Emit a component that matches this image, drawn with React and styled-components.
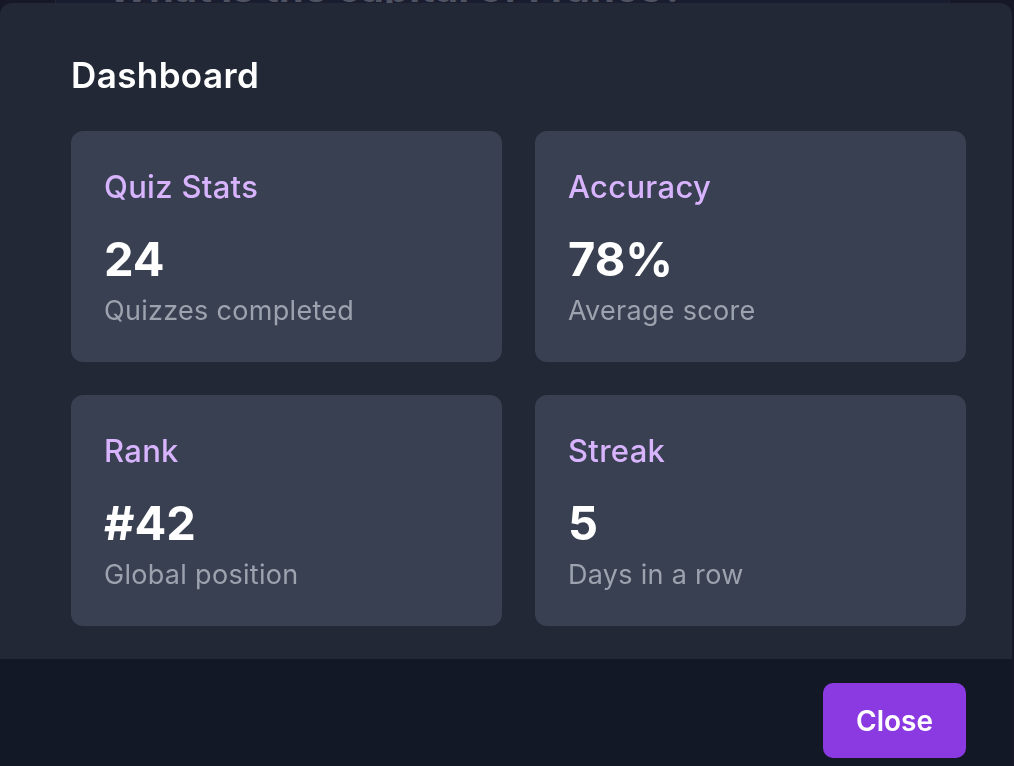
import React from "react";
import styled, { createGlobalStyle } from "styled-components";

const GlobalStyle = createGlobalStyle`
    html, body {
        margin: 0;
        padding: 0;
        background: #161827;
        font-family: Inter, "Noto Sans", "Liberation Sans", sans-serif;
        overflow: hidden;
    }
    * {
        box-sizing: border-box;
    }
`;

const stats = [
    { title: "Quiz Stats", value: "24", caption: "Quizzes completed" },
    { title: "Accuracy", value: "78%", caption: "Average score" },
    { title: "Rank", value: "#42", caption: "Global position" },
    { title: "Streak", value: "5", caption: "Days in a row" },
];

const App = () =>
{
    return (
        <>
            <GlobalStyle />
            <Page>
                <QuestionCard>
                    <Question>What is the capital of France?</Question>
                </QuestionCard>
            </Page>
            <Overlay>
                <Modal>
                    <Body>
                        <Title>Dashboard</Title>
                        <Grid>
                            {stats.map(item => {
                                return (
                                    <Card key={item.title}>
                                        <CardTitle>{item.title}</CardTitle>
                                        <Value>{item.value}</Value>
                                        <Caption>{item.caption}</Caption>
                                    </Card>
                                );
                            })}
                        </Grid>
                    </Body>
                    <Footer>
                        <CloseButton>Close</CloseButton>
                    </Footer>
                </Modal>
            </Overlay>
        </>
    );
};

const Page = styled.div`
    height: 766px;
    display: flex;
    justify-content: center;
`;

const QuestionCard = styled.div`
    width: 895px;
    margin-left: -10px;
    height: 200px;
    margin-top: -56px;
    background: #1a1c30;
    border-left: 1px solid #222538;
    border-right: 1px solid #222538;
    padding: 20px 52px;
`;

const Question = styled.h2`
    margin: 0;
    font-size: 40px;
    font-weight: 700;
    line-height: 48px;
    color: #4f5362;
`;

const Overlay = styled.div`
    position: fixed;
    inset: 0;
    display: flex;
    align-items: flex-start;
    padding-top: 3px;
`;

const Modal = styled.div`
    width: 1012px;
    background: #222836;
    border-radius: 12px 12px 0 0;
    overflow: hidden;
    display: flex;
    flex-direction: column;
`;

const Body = styled.div`
    padding: 54px 46px 33px 71px;
`;

const Title = styled.h1`
    margin: 0 0 38px 0;
    font-size: 35px;
    font-weight: 600;
    letter-spacing: 0.4px;
    line-height: 36px;
    color: #ffffff;
`;

const Grid = styled.div`
    display: grid;
    grid-template-columns: 1fr 1fr;
    gap: 33px;
`;

const Card = styled.div`
    background: #394051;
    border-radius: 12px;
    height: 231px;
    padding: 38px 33px 0 33px;
    display: flex;
    flex-direction: column;
`;

const CardTitle = styled.div`
    font-size: 31px;
    font-weight: 500;
    letter-spacing: 0.3px;
    line-height: 36px;
    color: #d8b4fe;
`;

const Value = styled.div`
    margin-top: 26px;
    font-size: 47px;
    font-weight: 700;
    line-height: 56px;
    color: #ffffff;
`;

const Caption = styled.div`
    margin-top: 6px;
    font-size: 27px;
    letter-spacing: 0.3px;
    line-height: 36px;
    color: #9ca3af;
`;

const Footer = styled.div`
    background: #121826;
    padding: 24px 46px 24px 71px;
    display: flex;
    justify-content: flex-end;
    flex: 1;
`;

const CloseButton = styled.button`
    background: #8a3ae0;
    color: #ffffff;
    border: none;
    border-radius: 10px;
    width: 143px;
    height: 75px;
    font-family: inherit;
    font-size: 28px;
    font-weight: 600;
    cursor: pointer;
`;

export default App;
